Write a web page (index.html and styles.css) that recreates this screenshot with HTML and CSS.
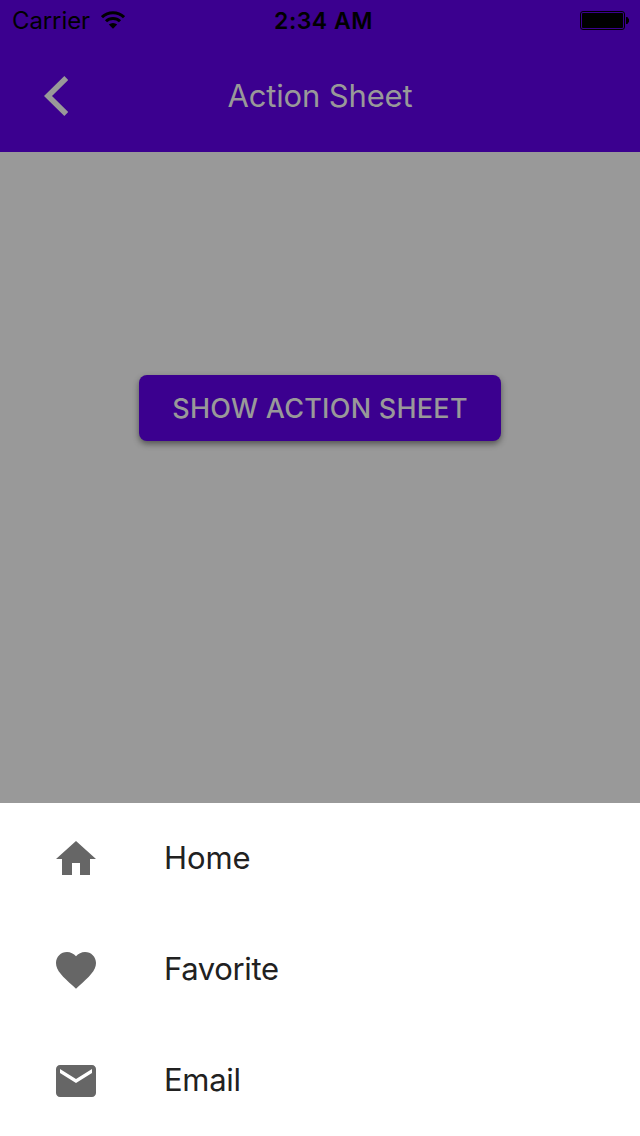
FILE: index.html
```
<!DOCTYPE html>
<html lang="en">
<head>
<meta charset="utf-8">
<title>Action Sheet</title>
<link rel="stylesheet" href="styles.css">
</head>
<body>
<div class="screen">
  <header class="header">
    <div class="status">
      <div class="status-left">
        <span class="carrier">Carrier</span>
        <svg class="wifi" width="24" height="18" viewBox="0 0 24 18"><g fill="none" stroke="#000" stroke-width="3"><path d="M1 6.200a15.800 15.800 0 0 1 22 0"/><path d="M5 10.300a10 10 0 0 1 14 0"/></g><path d="M7.800 13.600a6 6 0 0 1 8.400 0L12 17.800z"/></svg>
      </div>
      <span class="time">2:34 AM</span>
      <svg class="battery" width="50" height="20" viewBox="0 0 50 20"><rect x=".5" y=".5" width="44" height="18" rx="2.500" fill="none" stroke="#000"/><rect x="2" y="2" width="41" height="15" rx="1"/><path d="M46 6h1.500q.5 1.500 1.500 2v3q-1 .5-1.500 2H46z"/></svg>
    </div>
    <div class="navbar">
      <svg class="back" width="24" height="40" viewBox="0 0 24 40"><path d="M22.300 2 4 20l18.300 18" fill="none" stroke="#999" stroke-width="5.600"/></svg>
      <h1 class="title">Action Sheet</h1>
    </div>
  </header>
  <main class="content">
    <button class="action">SHOW ACTION SHEET</button>
  </main>
  <section class="sheet">
    <div class="item"><svg class="icon" viewBox="0 0 24 24"><path d="M10 20v-6h4v6h5v-8h3L12 3 2 12h3v8z"/></svg><span class="label home">Home</span></div>
    <div class="item"><svg class="icon" viewBox="0 0 24 24"><path d="M12 21.350l-1.450-1.320C5.400 15.360 2 12.280 2 8.500 2 5.420 4.420 3 7.500 3c1.740 0 3.410.810 4.500 2.090C13.090 3.810 14.760 3 16.500 3 19.580 3 22 5.420 22 8.500c0 3.780-3.400 6.860-8.550 11.540z"/></svg><span class="label favorite">Favorite</span></div>
    <div class="item"><svg class="icon" viewBox="0 0 24 24"><path d="M20 4H4c-1.100 0-1.990.900-1.990 2L2 18c0 1.100.900 2 2 2h16c1.100 0 2-.900 2-2V6c0-1.100-.900-2-2-2zm0 4l-8 5-8-5V6l8 5 8-5z"/></svg><span class="label email">Email</span></div>
  </section>
</div>
</body>
</html>
```
FILE: styles.css
```
* { box-sizing: border-box; }
body { margin: 0; font-family: Inter, sans-serif; }
.screen { width: 640px; height: 1136px; display: flex; flex-direction: column; background: #999; overflow: hidden; }
.header { height: 152px; background: #3b008f; }
.status { height: 42px; display: grid; grid-template-columns: 1fr auto 1fr; align-items: center; padding: 0 10px 0 12px; font-size: 24px; color: #000; }
.status-left { display: flex; align-items: center; gap: 11px; }
.carrier { letter-spacing: -.1px; padding-bottom: 1px; }
.wifi { margin-bottom: 2px; }
.time { font-weight: 600; font-size: 23px; letter-spacing: .5px; padding-left: 5px; }
.battery { justify-self: end; }
.navbar { height: 110px; display: grid; grid-template-columns: 68px 1fr 68px; align-items: center; }
.back { justify-self: end; margin-bottom: 2px; }
.title { margin: 0; padding-bottom: 4px; text-align: center; font-size: 31px; font-weight: 400; letter-spacing: -.15px; color: #999; }
.content { flex: 1; display: flex; justify-content: center; align-items: flex-start; padding-top: 223px; }
.action { width: 362px; height: 66px; border: 0; padding: 0; border-radius: 8px; background: #3b008f; color: #999; font: 500 27px Inter, sans-serif; letter-spacing: .25px; box-shadow: 0 3px 6px rgba(0,0,0,.45); white-space: nowrap; }
.sheet { height: 333px; background: #fff; }
.item { height: 111px; display: flex; align-items: center; padding-left: 52px; gap: 64px; }
.icon { width: 48px; height: 48px; fill: #666; }
.label { font-size: 31px; color: #212121; padding-bottom: 2px; }
.home { letter-spacing: -.1px; }
.favorite { letter-spacing: -.35px; }
.email { letter-spacing: -.3px; }
```
